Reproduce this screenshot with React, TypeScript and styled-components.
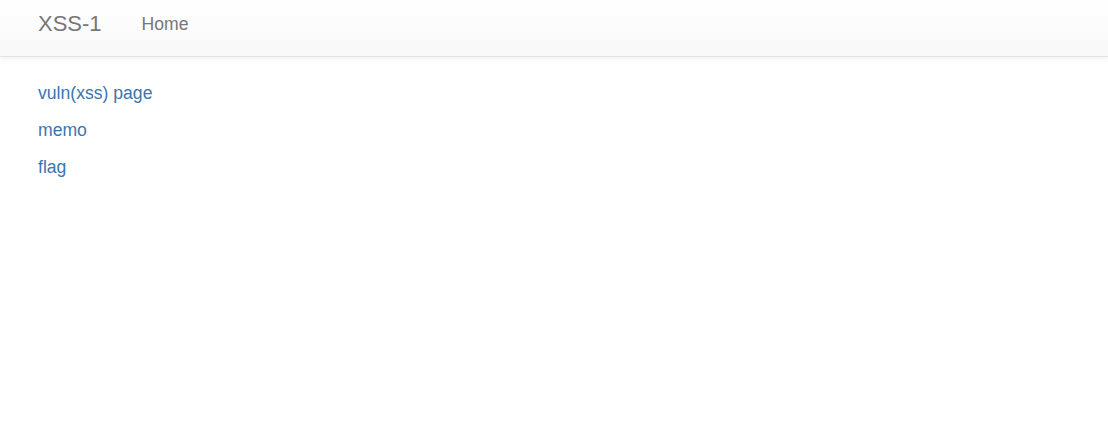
import React from "react";
import styled, { createGlobalStyle } from "styled-components";

const Global = createGlobalStyle`
  html, body { margin: 0; padding: 0; background: #fff; }
  body { font-family: "Liberation Sans", Arial, sans-serif; }
`;

const Navbar = styled.nav`
  height: 56px;
  display: flex;
  align-items: flex-start;
  padding-left: 38px;
  background-image: linear-gradient(to bottom, #ffffff 0%, #f8f8f8 100%);
  border-bottom: 1px solid #e4e4e4;
  box-shadow: inset 0 1px 0 rgba(255, 255, 255, 0.15), 0 1px 5px rgba(0, 0, 0, 0.075);
`;

const Brand = styled.a`
  font-size: 22px;
  line-height: 22px;
  margin-top: 13px;
  color: #777;
  text-decoration: none;
  margin-right: 40px;
`;

const NavLink = styled.a`
  font-size: 17.6px;
  line-height: 20px;
  margin-top: 14px;
  color: #777;
  text-decoration: none;
`;

const Content = styled.main`
  padding: 18px 38px 0;
  display: flex;
  flex-direction: column;
  align-items: flex-start;
`;

const Link = styled.a`
  font-size: 17.6px;
  line-height: 37px;
  color: #3a76b0;
  text-decoration: none;
`;

export default function App() {
  return (
    <>
      <Global />
      <Navbar>
        <Brand href="#">XSS-1</Brand>
        <NavLink href="#">Home</NavLink>
      </Navbar>
      <Content>
        <Link href="#">vuln(xss) page</Link>
        <Link href="#">memo</Link>
        <Link href="#">flag</Link>
      </Content>
    </>
  );
}
